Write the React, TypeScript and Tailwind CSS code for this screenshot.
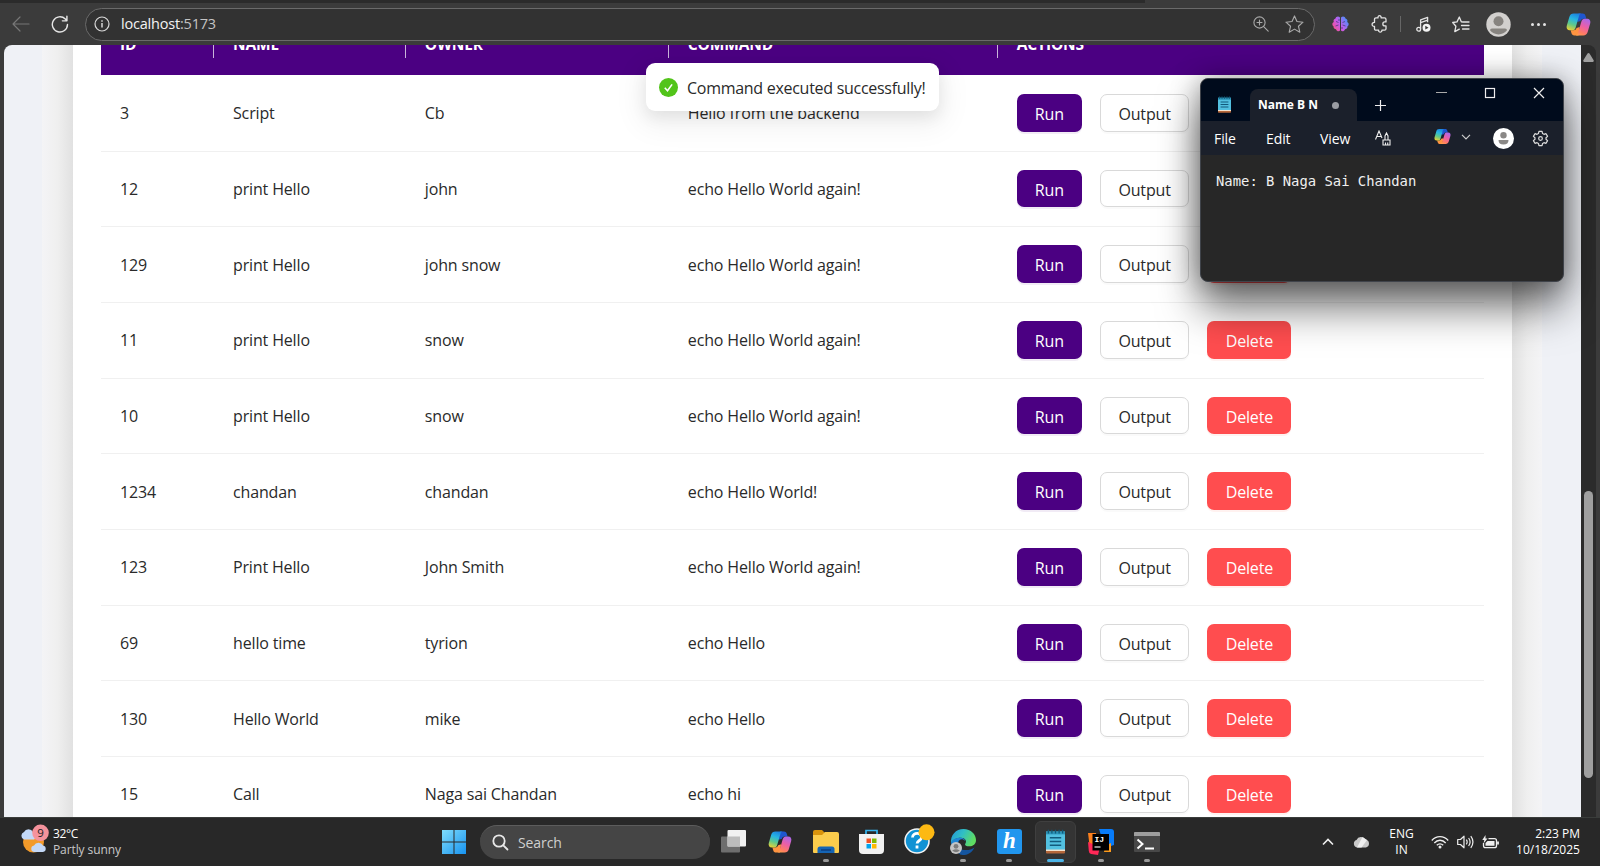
import React from 'react';

type Row = { id: string; name: string; owner: string; command: string };

const rows: Row[] = [
  { id: '3', name: 'Script', owner: 'Cb', command: 'Hello from the backend' },
  { id: '12', name: 'print Hello', owner: 'john', command: 'echo Hello World again!' },
  { id: '129', name: 'print Hello', owner: 'john snow', command: 'echo Hello World again!' },
  { id: '11', name: 'print Hello', owner: 'snow', command: 'echo Hello World again!' },
  { id: '10', name: 'print Hello', owner: 'snow', command: 'echo Hello World again!' },
  { id: '1234', name: 'chandan', owner: 'chandan', command: 'echo Hello World!' },
  { id: '123', name: 'Print Hello', owner: 'John Smith', command: 'echo Hello World again!' },
  { id: '69', name: 'hello time', owner: 'tyrion', command: 'echo Hello' },
  { id: '130', name: 'Hello World', owner: 'mike', command: 'echo Hello' },
  { id: '15', name: 'Call', owner: 'Naga sai Chandan', command: 'echo hi' },
];

const columns = ['ID', 'NAME', 'OWNER', 'COMMAND', 'ACTIONS'];
const grid = 'grid grid-cols-[113px_191.8px_263px_329px_1fr] items-center';

function Copilot({ size, id }: { size: number; id: string }) {
  return (
    <svg width={size} height={size} viewBox="0 0 24 24" fill="none">
      <defs>
        <linearGradient id={id + 'a'} x1="10" y1="1" x2="4" y2="18" gradientUnits="userSpaceOnUse">
          <stop stopColor="#1b7fe0" />
          <stop offset=".35" stopColor="#27b5e2" />
          <stop offset=".65" stopColor="#5fc98a" />
          <stop offset="1" stopColor="#f3d12f" />
        </linearGradient>
        <linearGradient id={id + 'b'} x1="20" y1="6" x2="12" y2="23" gradientUnits="userSpaceOnUse">
          <stop stopColor="#a668ee" />
          <stop offset=".45" stopColor="#ec5fa6" />
          <stop offset=".8" stopColor="#ff7d62" />
          <stop offset="1" stopColor="#ffa24a" />
        </linearGradient>
      </defs>
      <path d="M12 1.500h4c1.400 0 2.300.8 2.700 2.100l.9 2.900h-3c-1.500 0-2.300.9-2.700 2.200l-3 1z" fill="#1f56cf" />
      <path d="M12 22.500H8c-1.400 0-2.300-.8-2.700-2.100l-.9-2.900h3c1.500 0 2.300-.9 2.700-2.200l3-1z" fill="#ff9440" />
      <path d="M7.400 1.500h7.400c-1.300.2-1.900 1.100-2.300 2.300L9.200 15c-.6 1.800-1.500 2.600-3 2.600H4C1.300 17.600.1 15.600.8 12.900L3.200 4.800C3.900 2.600 5.200 1.500 7.400 1.500z" fill={'url(#' + id + 'a)'} />
      <path d="M16.600 22.500H9.200c1.300-.2 1.900-1.100 2.300-2.300L14.800 9c.6-1.800 1.500-2.600 3-2.600H20c2.700 0 3.900 2 3.200 4.700l-2.400 8.100c-.7 2.200-2 3.300-4.200 3.300z" fill={'url(#' + id + 'b)'} />
    </svg>
  );
}

function NotepadIcon({ w, h }: { w: number; h: number }) {
  return (
    <svg width={w} height={h} viewBox="0 0 20 25" fill="none">
      <rect x="0" y="20" width="20" height="5" rx="1" fill="#b5673a" />
      <rect x="0" y="19" width="20" height="3.500" fill="#f3e3cf" />
      <path d="M0 2h20v19H0z" fill="#52c0e0" />
      <path d="M0 2h20v3H0z" fill="#2b93b8" />
      <path d="M2.500 0v4M6.200 0v4M10 0v4M13.800 0v4M17.500 0v4" stroke="#0f5a78" strokeWidth="1.300" />
      <path d="M4 8.500h12M4 12.500h12M4 16.500h12" stroke="#125a7c" strokeWidth="1.600" />
    </svg>
  );
}

function BrowserBar() {
  return (
    <header className="flex h-[45px] shrink-0 flex-col bg-[#3b3b3b]">
      <div className="flex h-[3px] shrink-0 bg-[#2b2b2b]">
        <div className="ml-[1145px] w-[115px] bg-[#3b3b3b]" />
      </div>
      <div className="flex h-[42px] items-center">
        <div className="flex w-[42px] justify-center">
          <svg width="18" height="16" viewBox="0 0 18 16" fill="none" stroke="#777" strokeWidth="1.200" strokeLinecap="round" strokeLinejoin="round"><path d="M17 8H1M8 1L1 8l7 7" /></svg>
        </div>
        <div className="flex w-[35px] justify-center">
          <svg width="18" height="18" viewBox="0 0 18 19" fill="none" stroke="#e6e6e6" strokeWidth="1.500" strokeLinecap="round" strokeLinejoin="round"><path d="M16.900 10a8 8 0 1 1-2.300-5.700L16.300 6M16.300 1.200V6.200H11.500" /></svg>
        </div>
        <div className="ml-2 flex h-[33px] w-[1230px] items-center rounded-full border border-[#6a6a6a] bg-[#323232] pr-[10px] pl-2">
          <svg width="16" height="16" viewBox="0 0 16 16" fill="none" stroke="#d8d8d8" strokeWidth="1.200"><circle cx="8" cy="8" r="7" /><path d="M8 7v4.500" strokeWidth="1.500" /><path d="M8 4.300v1.400" strokeWidth="1.500" /></svg>
          <span className="ml-[11px] flex-1 text-[14.500px] tracking-[-0.2px] text-[#f2f2f2]">localhost<span className="text-[#c4c4c4]">:5173</span></span>
          <svg width="16" height="16" viewBox="0 0 16 16" fill="none" stroke="#a9a9a9" strokeWidth="1.100" strokeLinecap="round"><circle cx="6.500" cy="6.500" r="5.600" /><path d="M10.700 10.700L15.200 15.200M4 6.500h5M6.500 4v5" /></svg>
          <svg className="ml-[16px]" width="19" height="18" viewBox="0 0 20 19" fill="none" stroke="#a9a9a9" strokeWidth="1.200" strokeLinejoin="round"><path d="M10 1l2.600 5.900 6.400.7-4.800 4.300 1.400 6.300-5.600-3.300-5.600 3.300 1.400-6.300L1 7.600l6.400-.7z" /></svg>
        </div>
        <div className="ml-[5px] flex w-10 justify-center">
          <svg width="17" height="16" viewBox="0 0 17 16" fill="none">
            <defs><linearGradient id="brn" x1="0" y1="14" x2="17" y2="2" gradientUnits="userSpaceOnUse"><stop stopColor="#ff4f7d" /><stop offset=".45" stopColor="#c65bea" /><stop offset="1" stopColor="#2f9bff" /></linearGradient></defs>
            <path d="M8 1.500C6.500-.2 3.800.4 3.500 2.500 1.700 3 1.200 4.600 1.800 6-.1 7-.1 9.300 1.500 10.300c-.1 2 1.200 3 2.500 3 .8 2.200 3 2.600 4 1.200z" fill="url(#brn)" />
            <path d="M9 1.500c1.500-1.700 4.200-1.100 4.500 1 1.800.5 2.300 2.100 1.700 3.500 1.900 1 1.900 3.300.3 4.300.1 2-1.200 3-2.500 3-.8 2.200-3 2.600-4 1.200z" fill="url(#brn)" />
            <path d="M4 5.500l2.500 1M3.500 10l3-1M8 4H6M13 5.500l-2.500 1M13.500 10l-3-1M9 12h2" stroke="#4a3a80" strokeWidth=".8" />
          </svg>
        </div>
        <div className="flex w-[38px] justify-center">
          <svg width="17" height="18" viewBox="0 0 17 18" fill="none" stroke="#e4e4e4" strokeWidth="1.300" strokeLinejoin="round"><path d="M5 2.900h2c-.2-3 3.300-3 3.200 0h3.300q1.500 0 1.500 1.500v2.500h-1.200c-2.600 0-2.600 4 0 4H15v2.800q0 1.500-1.500 1.500h-2.600c.3 2.600-3.600 2.600-3.300 0H5q-1.500 0-1.500-1.500v-2.300C.3 11.700.3 7.200 3.500 7.400v-3Q3.500 2.900 5 2.900z" /></svg>
        </div>
        <div className="mx-0.5 h-4 w-px bg-[#666]" />
        <div className="flex w-[41px] justify-center">
          <svg width="15" height="17" viewBox="0 0 15 17" fill="none" stroke="#e4e4e4" strokeWidth="1.300" strokeLinejoin="round"><circle cx="2.700" cy="13.200" r="1.900" /><path d="M4.600 13V3.800l7-2.500v5M4.600 6.600l7-2.400" /><circle cx="10.500" cy="11.700" r="4" fill="#f4f4f4" stroke="none" /><path d="M9.300 9.800v3.800l3.200-1.900z" fill="#333" stroke="none" /></svg>
        </div>
        <div className="flex w-[33px] justify-center">
          <svg width="18" height="17" viewBox="0 0 18 17" fill="none" stroke="#e4e4e4" strokeWidth="1.300" strokeLinecap="round" strokeLinejoin="round"><path d="M11 6l-1.600-.1L7.300 1 5 5.900l-4.300.6 3.200 3.700L2.800 15.600l4.500-2.500M10.500 6H17M9.500 9.500H17M10.500 13H17" /></svg>
        </div>
        <div className="flex w-[43px] justify-center">
          <svg width="25" height="25" viewBox="0 0 25 25"><circle cx="12.500" cy="12.500" r="12.200" fill="#d2d0ce" /><circle cx="12.500" cy="9.300" r="5" fill="#86837f" /><path d="M4 18.300q0-1.700 2-1.700h13q2 0 2 1.700a10.800 10.800 0 0 1-17 0z" fill="#86837f" /></svg>
        </div>
        <div className="flex w-9 justify-center gap-[3px]">
          <i className="size-[3px] rounded-full bg-[#e4e4e4]" /><i className="size-[3px] rounded-full bg-[#e4e4e4]" /><i className="size-[3px] rounded-full bg-[#e4e4e4]" />
        </div>
        <div className="flex w-11 justify-center"><Copilot size={25} id="cpa" /></div>
      </div>
    </header>
  );
}

function Table() {
  return (
    <div className="mx-[28px] text-[16px] text-[#2a2a2a]">
      <div className={'-mt-8 h-[62px] bg-[#4b0082] font-bold text-white ' + grid}>
        {columns.map((c, i) => (
          <div key={c} className={'flex h-[27px] items-center pt-[2px] pl-[19px] text-[15.500px] tracking-[-0.15px] ' + (i < 4 ? 'border-r border-[#c9b5da]' : '')}>{c}</div>
        ))}
      </div>
      <div className="pt-px">
        {rows.map((r) => (
          <div key={r.id} className={'h-[75.68px] border-b border-[#f0f0f0] tracking-[-0.15px] ' + grid}>
            <div className="pl-[19px]">{r.id}</div>
            <div className="pl-[19px]">{r.name}</div>
            <div className="pl-[19px]">{r.owner}</div>
            <div className="pl-[19px]">{r.command}</div>
            <div className="-mt-px flex gap-[18.3px] pl-[19px]">
              <button className="h-[37.500px] w-[65px] rounded-[7px] bg-[#4b0082] pt-0.5 text-white shadow-[0_2px_0_rgba(75,0,130,0.08)]">Run</button>
              <button className="h-[37.500px] w-[89px] rounded-[7px] border border-[#d9d9d9] bg-white pt-0.5 shadow-[0_2px_0_rgba(0,0,0,0.02)]">Output</button>
              <button className="h-[37.500px] w-[84px] rounded-[7px] bg-[#ff4d4f] pt-0.5 text-white shadow-[0_2px_0_rgba(255,38,5,0.06)]">Delete</button>
            </div>
          </div>
        ))}
      </div>
    </div>
  );
}

function Toast() {
  return (
    <div className="absolute top-[63px] left-[646px] flex h-12 w-[293px] items-center rounded-[9px] bg-white pl-[13px] text-[16px] text-[#2a2a2a] shadow-[0_6px_16px_rgba(0,0,0,0.08),0_9px_28px_8px_rgba(0,0,0,0.05)]">
      <svg width="19" height="19" viewBox="0 0 19 19" fill="none"><circle cx="9.500" cy="9.500" r="9.500" fill="#52c41a" /><path d="M5.800 9.800l2.700 2.900 4.600-6.300" stroke="#fff" strokeWidth="1.600" /></svg>
      <span className="ml-[9px] pt-px whitespace-nowrap tracking-[-0.28px]">Command executed successfully!</span>
    </div>
  );
}

function NotepadWindow() {
  return (
    <div className="absolute top-[78px] left-[1200px] flex h-[204px] w-[364px] flex-col overflow-hidden rounded-lg border border-[#3f434a] bg-[#272727] text-white shadow-[0_0_28px_rgba(0,0,0,0.35),0_26px_42px_rgba(0,0,0,0.55)]">
      <div className="flex h-[42px] shrink-0 bg-[#000b1c]">
        <div className="mt-[17px] ml-[17px] w-[13px]"><NotepadIcon w={13} h={17} /></div>
        <div className="mt-[10px] ml-[19px] flex w-[107px] items-center rounded-t-lg bg-[#1b202b] pl-[8px]">
          <span className="w-[74px] text-[12px] font-bold whitespace-nowrap">Name B N</span>
          <i className="size-[7px] rounded-full bg-[#9a9ca3]" />
        </div>
        <svg className="mt-[21px] ml-[18px]" width="11" height="11" viewBox="0 0 11 11" stroke="#eee" strokeWidth="1.200"><path d="M5.500 0v11M0 5.500h11" /></svg>
        <svg className="mt-[8px] ml-[50px]" width="110" height="12" viewBox="0 0 110 12" fill="none" stroke="#eee" strokeWidth="1.200"><path d="M0 5.500h11" stroke="#aaa" /><rect x="49.500" y="1.500" width="9" height="9" /><path d="M98 1l10 10M108 1L98 11" /></svg>
      </div>
      <div className="flex h-[34px] shrink-0 items-center bg-[#1b202b] pl-[13px] text-[14px] tracking-[-0.1px]">
        <span className="w-[52px]">File</span>
        <span className="w-[54px]">Edit</span>
        <span className="w-[55px]">View</span>
        <svg width="16" height="16" viewBox="0 0 16 16" fill="none" stroke="#eee" strokeWidth="1.100"><path d="M.5 9.500L4 1l3 7M2 6.500h4M8 15v-5h7v5zM10 10V6l1.500-3L13 6v4M10.500 12.500V15M12.700 12.500V15" /></svg>
        <div className="-mt-[3px] ml-[43px]"><Copilot size={17} id="cpb" /></div>
        <svg className="-mt-[3px] ml-[10px]" width="10" height="6" viewBox="0 0 10 6" fill="none" stroke="#ccc" strokeWidth="1.200"><path d="M1 .8l4 4 4-4" /></svg>
        <svg className="ml-[22px]" width="21" height="21" viewBox="0 0 21 21"><circle cx="10.500" cy="10.500" r="10.500" fill="#fff" /><circle cx="10.500" cy="7.200" r="3.200" fill="#8a8886" /><path d="M5.500 12h10q0 4.500-5 4.500t-5-4.500z" fill="#8a8886" /></svg>
        <svg className="ml-[18px]" width="17" height="17" viewBox="0 0 24 24" fill="none" stroke="#ddd" strokeWidth="1.700" strokeLinejoin="round"><path d="M9.800 2h4.400l.7 3 2 1.100 2.900-.9 2.200 3.800-2.200 2v2l2.200 2-2.200 3.800-2.900-.9-2 1.100-.7 3H9.800l-.7-3-2-1.100-2.900.9L2 15l2.200-2v-2L2 9l2.200-3.800 2.900.9 2-1.100z" /><circle cx="12" cy="12" r="2.600" /></svg>
      </div>
      <div className="pt-[16px] pl-[15px] font-['DejaVu_Sans_Mono','Liberation_Mono',monospace] text-[13.870px] leading-5 whitespace-pre text-[#f0f0f0]">Name: B Naga Sai Chandan</div>
    </div>
  );
}

function TaskbarApp({ children, bar = 'gray', active = false }: { children: React.ReactNode; bar?: 'gray' | 'blue' | 'none'; active?: boolean }) {
  return (
    <div className="flex w-[45.900px] flex-col items-center">
      <div className={'relative flex h-[42px] w-[41px] flex-col items-center rounded-md ' + (active ? 'border border-[#3f3f3f] bg-[#343434]' : 'border border-transparent')}>
        <div className="flex h-[39px] items-center justify-center">{children}</div>
        {bar === 'gray' && <i className="absolute bottom-[0px] h-[3px] w-[6px] rounded-full bg-[#9a9a9a]" />}
        {bar === 'blue' && <i className="absolute bottom-[0px] h-[3px] w-[17px] rounded-full bg-[#4cb5e8]" />}
      </div>
    </div>
  );
}

function Taskbar() {
  return (
    <footer className="flex h-[49px] shrink-0 items-center border-t border-[#3a3d3b] bg-[#282828] text-[12px] text-white">
      <div className="flex w-[431px] items-center pl-5">
        <svg className="-mt-1.5" width="30" height="30" viewBox="0 0 30 30">
          <circle cx="13.500" cy="18" r="10.500" fill="#f29a2a" />
          <path d="M4 15.500a4 4 0 0 1 0-7.500 5 5 0 0 1 9 0 4 4 0 0 1 1 7.500z" fill="#c3d8f7" />
          <path d="M14 28a3.300 3.300 0 0 1 0-6.500 5 5 0 0 1 9 0 3.300 3.300 0 0 1 0 6.500z" fill="#c3d8f7" />
          <circle cx="20.500" cy="8.800" r="8.300" fill="#f4929c" />
          <text x="20.500" y="13" textAnchor="middle" fontSize="11.500" fill="#222">9</text>
        </svg>
        <div className="ml-[3px] leading-[16.500px]">
          <div className="tracking-[-0.4px]">32°C</div>
          <div className="tracking-[-0.1px] text-[#c8c8c8]">Partly sunny</div>
        </div>
      </div>
      <div className="flex w-[46px] justify-center">
        <svg width="24" height="24" viewBox="0 0 24 24"><defs><linearGradient id="win" x1="0" y1="0" x2="1" y2="1"><stop stopColor="#7fdcfb" /><stop offset="1" stopColor="#1793f0" /></linearGradient></defs><path d="M0 0h11.500v11.500H0zM12.500 0H24v11.500H12.500zM0 12.500h11.500V24H0zM12.500 12.500H24V24H12.500z" fill="url(#win)" /></svg>
      </div>
      <div className="ml-[3px] flex h-[34px] w-[230px] items-center rounded-full border-t border-[#5c5c5c] bg-[#454545] pl-3">
        <svg width="17" height="17" viewBox="0 0 17 17" fill="none" stroke="#e8e8e8" strokeWidth="1.800" strokeLinecap="round"><circle cx="7" cy="7" r="5.700" /><path d="M11.300 11.300L15.500 15.500" /></svg>
        <span className="ml-[9px] text-[14px] tracking-[-0.1px] text-[#d0d0d0]">Search</span>
      </div>
      <div className="ml-px flex">
        <TaskbarApp bar="none"><svg width="25" height="23" viewBox="0 0 25 23"><rect x="0" y="6.500" width="19" height="16" rx="1" fill="#6e6e6e" /><rect x="6.500" y="0" width="18.500" height="16.500" rx="1" fill="#f2f2f2" /><path d="M6.500 6.500H19v10H6.500z" fill="#bdbdbd" /></svg></TaskbarApp>
        <TaskbarApp bar="none"><Copilot size={24} id="cpc" /></TaskbarApp>
        <TaskbarApp><svg width="26" height="23" viewBox="0 0 26 23"><path d="M0 2q0-2 2-2h7l3 3-3 3H0z" fill="#d9930c" /><path d="M0 5h9l3-3h12q2 0 2 2v18q0 1-1 1H1q-1 0-1-1z" fill="#fbcc4c" /><path d="M4.500 23v-4q0-2.500 2.500-2.500h12q2.500 0 2.500 2.500v4z" fill="#1565b5" /><path d="M8 20h10" stroke="#0b3e82" strokeWidth="1.500" /></svg></TaskbarApp>
        <TaskbarApp bar="none"><svg width="25" height="25" viewBox="0 0 25 25" fill="none"><path d="M7 6V1.500h11V6" stroke="#35b4ee" strokeWidth="1.700" /><path d="M0 5h25v16q0 4-4 4H4q-4 0-4-4z" fill="#f1f1f1" /><path d="M7.500 9.500h4.500v4.500H7.500z" fill="#f25022" /><path d="M13 9.500h4.500v4.500H13z" fill="#7fba00" /><path d="M7.500 15h4.500v4.500H7.500z" fill="#00a4ef" /><path d="M13 15h4.500v4.500H13z" fill="#ffb900" /></svg></TaskbarApp>
        <TaskbarApp bar="none"><svg className="-mt-1.5 ml-1" width="31" height="30" viewBox="0 0 31 30" fill="none"><circle cx="13" cy="17" r="12" fill="#1192d4" stroke="#f4f4f4" strokeWidth="1.600" /><path d="M8.500 13.500c.3-5.500 9.500-5.300 9 0-.2 3-4.200 3-4.400 6M13 21.500v3" stroke="#fff" strokeWidth="2.800" /><circle cx="22.500" cy="8.300" r="8" fill="#fdb913" /></svg></TaskbarApp>
        <TaskbarApp>
          <svg width="26" height="26" viewBox="0 0 26 26">
            <defs><linearGradient id="edg" x1="0" y1="0" x2="1" y2=".4"><stop stopColor="#2293dc" /><stop offset=".5" stopColor="#30bfc4" /><stop offset="1" stopColor="#5fdc62" /></linearGradient></defs>
            <path d="M1 15C0 6 6 0 13.500 0 21 0 26 5.500 26 11c0 4-3 6.300-6.500 6.300-3 0-5-1-4.300-2.400 2.200-3-.2-6.200-4.200-6.200-5 0-9.500 2.700-10 6.300z" fill="url(#edg)" />
            <path d="M1 14c1-3.500 5-5.300 9.500-5.300 2.500 0 4.500 1.500 4.700 3.300-1.700-2-4.200-2.200-5.700-1-4 4-1.500 10.500 4.500 12-4 2-9 0-13-9z" fill="#1f86d6" />
            <path d="M9.500 11c-4 4-1.500 9.500 4.500 10 4 .4 8-.5 10.500-2.500C22 23.500 17.500 26.500 12.500 26 7 25.500 5 19 9.500 11z" fill="#14559f" />
            <circle cx="6" cy="19" r="6" fill="#c4c4c4" /><circle cx="6" cy="17.300" r="2.400" fill="#7c7c7c" /><path d="M2.200 21.500q3.800-2.500 7.600 0-3.800 3.500-7.600 0z" fill="#7c7c7c" />
          </svg>
        </TaskbarApp>
        <TaskbarApp><div className="flex size-[25px] items-center justify-center rounded-[3px] bg-[#2196ee] pb-[2px] font-['Liberation_Serif',serif] text-[23px] leading-none font-bold text-white italic">h</div></TaskbarApp>
        <TaskbarApp bar="blue" active><NotepadIcon w={19} h={25} /></TaskbarApp>
        <TaskbarApp><svg width="26" height="26" viewBox="0 0 26 26"><path d="M0 4l8 0 2 14-8 2z" fill="#fc801d" /><path d="M11 0h12q3 0 3 3v13l-9 3z" fill="#087cfa" /><path d="M0 13l12 5-2 8-7-1q-2-.5-2.200-3z" fill="#fe2857" /><path d="M17 17l6-3v9h-7z" fill="#fc9a1d" /><path d="M4.500 5H21v16.500H4.500z" fill="#000" /><text x="6.500" y="13" fontSize="8" fontWeight="700" fill="#fff" fontFamily="Liberation Mono">IJ</text><path d="M6.500 18h6" stroke="#fff" strokeWidth="1.100" /></svg></TaskbarApp>
        <TaskbarApp><svg width="26" height="20" viewBox="0 0 26 20" fill="none"><rect width="26" height="20" rx="1" fill="#484848" /><path d="M0 1q0-1 1-1h24q1 0 1 1v3H0z" fill="#9e9e9e" /><path d="M3.500 7.500l5 4.500-5 4.500M11 16.500h9" stroke="#fff" strokeWidth="2" /></svg></TaskbarApp>
      </div>
      <div className="flex flex-1 items-center justify-end pr-[20px]">
        <svg width="12" height="8" viewBox="0 0 12 8" fill="none" stroke="#eee" strokeWidth="1.600"><path d="M1 6.500l5-5 5 5" /></svg>
        <svg className="ml-[19px]" width="17" height="12" viewBox="0 0 17 12"><path d="M4 11.500A3.900 3.900 0 0 1 3.500 4a5 5 0 0 1 9-.5 4.100 4.100 0 0 1 .5 8z" fill="#c9c9c9" /><path d="M9.500 1L4 11.500h4.500L14 4z" fill="#efefef" /></svg>
        <div className="ml-[18px] w-[27px] text-center leading-[16.500px]">ENG<br />IN</div>
        <svg className="ml-[16px]" width="18" height="14" viewBox="0 0 18 14" fill="none" stroke="#eee" strokeWidth="1.300"><path d="M.8 5.500C5.200.2 12.800.2 17.200 5.500M3.300 8c3.200-3.700 8.200-3.700 11.400 0M5.800 10.300c1.800-2 4.600-2 6.400 0" /><circle cx="9" cy="12" r="1.500" fill="#eee" stroke="none" /></svg>
        <svg className="ml-[8px]" width="17" height="14" viewBox="0 0 17 14" fill="none" stroke="#eee" strokeWidth="1.200" strokeLinejoin="round"><path d="M.7 4.500h2.800L7 1.200v11.600L3.500 9.500H.7zM9.300 4.700q1.700 2.300 0 4.600M11.600 3q3 4 0 8M13.800 1.200q4.300 5.800 0 11.600" /></svg>
        <svg className="ml-[8px]" width="17" height="14" viewBox="0 0 17 14" fill="none" stroke="#eee" strokeWidth="1.300"><path d="M6.500 3.700h6q2 0 2 2v5q0 2-2 2H3.500q-2 0-2-2V8" /><path d="M5.500 6h7v4.700h-9V8z" fill="#eee" stroke="none" /><path d="M16 6.500v3" strokeWidth="1.800" /><path d="M3.500 0L.3 5h2L1.500 8.500 5.500 3.500h-2z" fill="#eee" stroke="none" /></svg>
        <div className="ml-[16px] w-[65px] text-right leading-[16.500px] whitespace-nowrap"><div>2:23 PM</div><div className="-ml-1 tracking-[0.03px]">10/18/2025</div></div>
      </div>
    </footer>
  );
}

export default function App() {
  return (
    <div className="relative flex h-[866px] w-[1600px] flex-col overflow-hidden bg-[#3b3b3b] font-['Open_Sans','Noto_Sans',sans-serif]">
      <BrowserBar />
      <main className="flex min-h-0 flex-1 pr-1 pl-1">
        <div className="flex flex-1 overflow-hidden rounded-tl-lg bg-[#eff1f6]">
          <div className="ml-[38px] w-[31px] bg-linear-to-r from-[#f4f4f6] via-[#efefef] to-[#e1e1e1]" />
          <div className="flex-1 overflow-hidden bg-white"><Table /></div>
          <div className="mr-[39px] w-[30px] bg-linear-to-l from-[#f4f4f6] via-[#efefef] to-[#e1e1e1]" />
        </div>
        <div className="flex w-[15px] flex-col items-center rounded-tr-lg bg-[#2b2b2b]">
          <svg className="mt-2 shrink-0" width="11" height="9" viewBox="0 0 11 9"><path d="M5.500 0q.7 0 1 .6l4.300 7Q11 9 9.800 9H1.200Q0 9 .2 7.600l4.300-7Q4.800 0 5.500 0z" fill="#9f9f9f" /></svg>
          <div className="mt-[429px] h-[287px] w-[9px] rounded-full bg-[#9f9f9f]" />
        </div>
      </main>
      <Taskbar />
      <Toast />
      <NotepadWindow />
    </div>
  );
}
